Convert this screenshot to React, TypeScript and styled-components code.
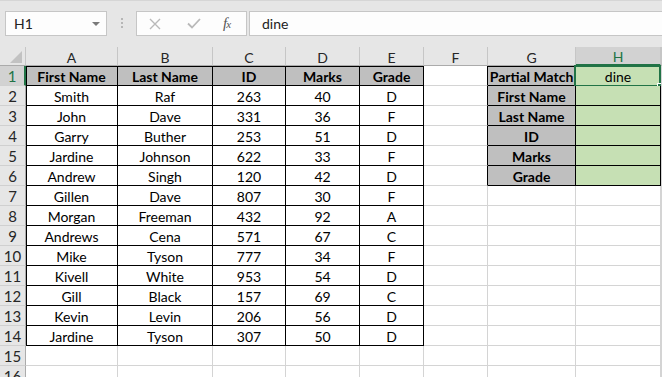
import React from "react";
import styled, { createGlobalStyle } from "styled-components";

const Global = createGlobalStyle`
  html, body { margin: 0; padding: 0; background: #ffffff; overflow: hidden; }
  * { box-sizing: border-box; }
`;

const FONT = `"Lato", "Open Sans", "Liberation Sans", sans-serif`;

const Frame = styled.div`
  width: 662px;
  height: 377px;
  overflow: hidden;
  display: flex;
  flex-direction: column;
  font-family: ${FONT};
  background: #ffffff;
`;

const FormulaArea = styled.div`
  height: 47px;
  flex: none;
  background: #e6e6e6;
  border-top: 1px solid #d6d6d6;
  display: flex;
  align-items: flex-start;
  padding: 10px 0 0 5px;
`;

const NameBox = styled.div`
  width: 102px;
  height: 25px;
  background: #fdfdfd;
  border: 1px solid #c6c6c6;
  display: flex;
  align-items: center;
  justify-content: space-between;
  padding: 0 6px 0 8px;
  font-size: 14px;
  color: #222;
`;

const Caret = styled.span`
  width: 0;
  height: 0;
  border-left: 4px solid transparent;
  border-right: 4px solid transparent;
  border-top: 4px solid #7a7a7a;
`;

const Dots = styled.div`
  margin-left: 14px;
  margin-top: 7px;
  display: flex;
  flex-direction: column;
  gap: 2px;
  & > span { width: 2px; height: 2px; background: #b6b6b6; display: block; }
`;

const FxBox = styled.div`
  margin-left: 13px;
  width: 111px;
  height: 25px;
  background: #fdfdfd;
  border: 1px solid #c6c6c6;
  display: flex;
  align-items: center;
  padding-left: 12px;
`;

const IconSlot = styled.div<{ $w: number }>`
  width: ${(p) => p.$w}px;
  display: flex;
  align-items: center;
  justify-content: flex-start;
`;

const FxText = styled.span`
  font-family: "Liberation Serif", serif;
  font-style: italic;
  font-size: 15px;
  color: #555;
  letter-spacing: -1px;
  & > small { font-size: 11px; }
`;

const FormulaInput = styled.div`
  margin-left: 2px;
  flex: 1;
  height: 25px;
  background: #fdfdfd;
  border: 1px solid #c6c6c6;
  border-right: none;
  display: flex;
  align-items: center;
  padding-left: 12px;
  font-size: 14px;
  color: #222;
`;

const Grid = styled.div`
  display: grid;
  grid-template-columns: 26px 92px 95px 73px 74px 64px 64px 88px 85px 1fr;
  grid-template-rows: 19px repeat(16, 20px);
`;

const Corner = styled.div`
  background: #e6e6e6;
  border-right: 1px solid #c6c6c6;
  border-bottom: 1px solid #ababab;
  position: relative;
`;

const ColHead = styled.div<{ $sel?: boolean }>`
  background: ${(p) => (p.$sel ? "#d2d2d2" : "#e6e6e6")};
  color: ${(p) => (p.$sel ? "#217346" : "#262626")};
  border-right: 1px solid #c6c6c6;
  border-bottom: ${(p) => (p.$sel ? "2px solid #217346" : "1px solid #ababab")};
  display: flex;
  align-items: center;
  justify-content: center;
  font-size: 14px;
  padding-top: 2px;
`;

const RowHead = styled.div<{ $sel?: boolean }>`
  background: ${(p) => (p.$sel ? "#d2d2d2" : "#e6e6e6")};
  color: ${(p) => (p.$sel ? "#217346" : "#262626")};
  border-right: ${(p) => (p.$sel ? "2px solid #217346" : "1px solid #ababab")};
  border-bottom: 1px solid #d0d0d0;
  display: flex;
  align-items: center;
  justify-content: center;
  font-size: 15px;
  padding-top: 1px;
`;

const Cell = styled.div<{
  $fill: string;
  $right: string;
  $bottom: string;
  $left?: boolean;
  $top?: boolean;
  $bold?: boolean;
}>`
  position: relative;
  background: ${(p) => p.$fill};
  border-right: 1px solid ${(p) => p.$right};
  border-bottom: 1px solid ${(p) => p.$bottom};
  box-shadow: ${(p) =>
    [p.$left ? "inset 1px 0 0 #000" : "", p.$top ? "inset 0 1px 0 #000" : ""]
      .filter(Boolean)
      .join(", ") || "none"};
  display: flex;
  align-items: center;
  justify-content: center;
  padding-top: 1px;
  font-size: 14px;
  font-weight: ${(p) => (p.$bold ? 700 : 400)};
  color: #000;
  white-space: nowrap;
  overflow: visible;
`;

const Selection = styled.div`
  position: absolute;
  top: -1px;
  left: -2px;
  right: -1px;
  bottom: -2px;
  border: 2px solid #217346;
  pointer-events: none;
`;

const Handle = styled.div`
  position: absolute;
  right: -5px;
  bottom: -5px;
  width: 7px;
  height: 7px;
  background: #217346;
  border: 1px solid #ffffff;
`;

const cols = ["A", "B", "C", "D", "E", "F", "G", "H", ""];

const data: string[][] = [
  ["First Name", "Last Name", "ID", "Marks", "Grade"],
  ["Smith", "Raf", "263", "40", "D"],
  ["John", "Dave", "331", "36", "F"],
  ["Garry", "Buther", "253", "51", "D"],
  ["Jardine", "Johnson", "622", "33", "F"],
  ["Andrew", "Singh", "120", "42", "D"],
  ["Gillen", "Dave", "807", "30", "F"],
  ["Morgan", "Freeman", "432", "92", "A"],
  ["Andrews", "Cena", "571", "67", "C"],
  ["Mike", "Tyson", "777", "34", "F"],
  ["Kivell", "White", "953", "54", "D"],
  ["Gill", "Black", "157", "69", "C"],
  ["Kevin", "Levin", "206", "56", "D"],
  ["Jardine", "Tyson", "307", "50", "D"],
];

const lookup = ["Partial Match", "First Name", "Last Name", "ID", "Marks", "Grade"];

const inTable = (r: number, c: number) =>
  (r >= 1 && r <= 14 && c >= 1 && c <= 5) || (r >= 1 && r <= 6 && c >= 7 && c <= 8);

function cellInfo(r: number, c: number) {
  let text = "";
  let bold = false;
  let fill = "#ffffff";
  if (r >= 1 && r <= 14 && c >= 1 && c <= 5) {
    text = data[r - 1][c - 1];
    if (r === 1) {
      bold = true;
      fill = "#bfbfbf";
    }
  }
  if (r >= 1 && r <= 6 && c === 7) {
    text = lookup[r - 1];
    bold = true;
    fill = "#bfbfbf";
  }
  if (r >= 1 && r <= 6 && c === 8) {
    fill = "#c6e0b4";
    if (r === 1) text = "dine";
  }
  return { text, bold, fill };
}

const XIcon = () => (
  <svg width="12" height="12" viewBox="0 0 12 12">
    <path d="M1 1 L11 11 M11 1 L1 11" stroke="#b9b9b9" strokeWidth="1.4" fill="none" />
  </svg>
);

const CheckIcon = () => (
  <svg width="14" height="11" viewBox="0 0 14 11">
    <path d="M1 5.5 L5 9.5 L13 1" stroke="#b9b9b9" strokeWidth="1.8" fill="none" />
  </svg>
);

const CornerTri = () => (
  <svg width="26" height="19" viewBox="0 0 26 19" style={{ position: "absolute", left: 0, top: 0 }}>
    <polygon points="10,16 22,16 22,4" fill="#c2c2c2" />
  </svg>
);

export default function App() {
  const rows = Array.from({ length: 16 }, (_, i) => i + 1);
  return (
    <Frame>
      <Global />
      <FormulaArea>
        <NameBox>
          <span>H1</span>
          <Caret />
        </NameBox>
        <Dots>
          <span />
          <span />
          <span />
        </Dots>
        <FxBox>
          <IconSlot $w={38}>
            <XIcon />
          </IconSlot>
          <IconSlot $w={36}>
            <CheckIcon />
          </IconSlot>
          <IconSlot $w={20}>
            <FxText>
              f<small>x</small>
            </FxText>
          </IconSlot>
        </FxBox>
        <FormulaInput>dine</FormulaInput>
      </FormulaArea>
      <Grid>
        <Corner>
          <CornerTri />
        </Corner>
        {cols.map((c, i) => (
          <ColHead key={"h" + i} $sel={c === "H"}>
            {c}
          </ColHead>
        ))}
        {rows.map((r) => (
          <React.Fragment key={r}>
            <RowHead $sel={r === 1}>{r}</RowHead>
            {cols.map((_, ci) => {
              const c = ci + 1;
              const info = cellInfo(r, c);
              const tbl = inTable(r, c);
              const right = tbl || inTable(r, c + 1) ? "#000000" : "#d4d4d4";
              const bottom = tbl || inTable(r + 1, c) ? "#000000" : "#d4d4d4";
              const left = tbl && c === 1;
              return (
                <Cell
                  key={c}
                  $fill={info.fill}
                  $right={right}
                  $bottom={bottom}
                  $left={left}
                  $top={tbl && r === 1}
                  $bold={info.bold}
                >
                  {info.text}
                  {r === 1 && c === 8 && (
                    <Selection>
                      <Handle />
                    </Selection>
                  )}
                </Cell>
              );
            })}
          </React.Fragment>
        ))}
      </Grid>
    </Frame>
  );
}
